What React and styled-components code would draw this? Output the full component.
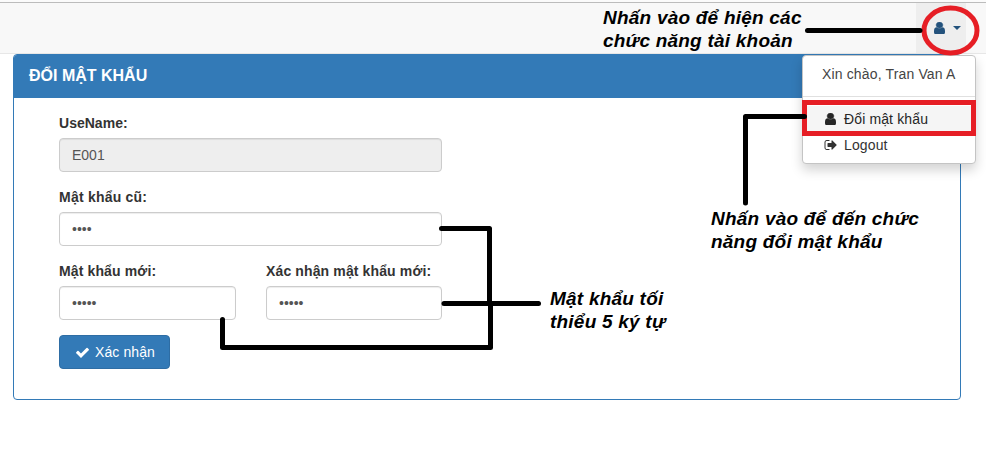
import React from "react";
import styled, { createGlobalStyle } from "styled-components";

const GlobalStyle = createGlobalStyle`
  *, *::before, *::after { box-sizing: border-box; }
  body {
    margin: 0;
    background: #fff;
    color: #333;
    font: 14px/20px "Liberation Sans", Arial, sans-serif;
    overflow: hidden;
  }
`;

const Page = styled.div`
  position: relative;
  width: 986px;
  height: 475px;
  overflow: hidden;
`;

const Navbar = styled.header`
  display: flex;
  justify-content: flex-end;
  height: 54px;
  padding: 0 20px;
  background: #f8f8f8;
  border-bottom: 1px solid #e7e7e7;
  box-shadow: inset 0 2px #fbfbfb, inset 0 3px #bcbcbc;
`;

const AccountToggle = styled.button`
  display: flex;
  align-items: center;
  gap: 8px;
  width: 50px;
  height: 50px;
  margin-top: 3px;
  padding: 0 0 0 18px;
  border: 0;
  background: #eee;
  color: #23527c;
`;

const Caret = styled.span`
  border-top: 4px solid currentColor;
  border-left: 4px solid transparent;
  border-right: 4px solid transparent;
`;

const Panel = styled.main`
  width: 948px;
  height: 346px;
  margin-left: 13px;
  border: 1px solid #337ab7;
  border-radius: 4px;
  overflow: hidden;
`;

const PanelHeading = styled.h1`
  height: 43px;
  margin: 0;
  padding: 10px 15px;
  background: #337ab7;
  color: #fff;
  font-size: 16px;
  line-height: 21px;
`;

const Form = styled.form`
  display: flex;
  flex-direction: column;
  gap: 15px;
  width: 428px;
  padding: 15px 0 0 45px;
`;

const FieldRow = styled.div`
  display: grid;
  grid-template-columns: 177px 176px;
  gap: 30px;
`;

const Field = styled.div`
  display: flex;
  flex-direction: column;
  gap: 5px;
`;

const Label = styled.label`
  font-weight: bold;
  white-space: nowrap;
  letter-spacing: ${(p) => p.$spacing || "0.13px"};
`;

const Input = styled.input`
  width: 100%;
  height: 34px;
  padding: 6px 12px;
  border: 1px solid #ccc;
  border-radius: 4px;
  background: ${(p) => (p.disabled ? "#eee" : "#fff")};
  box-shadow: inset 0 1px 1px rgba(0, 0, 0, 0.075);
  color: #555;
  font: inherit;
  outline: 0;
`;

const SubmitButton = styled.button`
  display: flex;
  align-items: center;
  gap: 5px;
  width: 111px;
  height: 34px;
  padding: 0 0 0 15px;
  border: 1px solid #2e6da4;
  border-radius: 4px;
  background: #337ab7;
  color: #fff;
  font: inherit;
  letter-spacing: 0.1px;
  white-space: nowrap;
`;

const Menu = styled.div`
  position: absolute;
  left: 802px;
  top: 55px;
  width: 174px;
  height: 109px;
  padding: 5px 0;
  border: 1px solid #c4c4c4;
  border-radius: 4px;
  background: #fff;
  box-shadow: 0 6px 12px rgba(0, 0, 0, 0.175);
`;

const Greeting = styled.div`
  height: 36px;
  padding: 3px 19px;
  border-bottom: 1px solid #e0e0e0;
  margin-bottom: 9px;
  color: #444;
  white-space: nowrap;
  letter-spacing: 0.15px;
`;

const MenuItem = styled.div`
  display: flex;
  align-items: center;
  gap: 6px;
  height: 26px;
  padding-left: 20px;
  background: ${(p) => (p.$active ? "#f5f5f5" : "transparent")};
  color: ${(p) => (p.$active ? "#262626" : "#333")};
  letter-spacing: 0.13px;
`;

const IconSlot = styled.span`
  display: flex;
  justify-content: center;
  width: 15px;
`;

const Icon = styled.svg`
  display: block;
  flex: none;
  fill: currentColor;
`;

const Markup = styled.svg`
  position: absolute;
  inset: 0;
  pointer-events: none;
`;

const Note = styled.p`
  position: absolute;
  left: ${(p) => p.$x}px;
  top: ${(p) => p.$y}px;
  margin: 0;
  color: #000;
  font-size: 19px;
  font-weight: bold;
  font-style: italic;
  line-height: 23px;
  letter-spacing: 0.22px;
  white-space: nowrap;
`;

const NoteLine = styled.span`
  display: block;
`;

const UserIcon = () => (
  <Icon width="11" height="12" viewBox="256 128 1280 1536" preserveAspectRatio="none">
    <path
      stroke="currentColor"
      strokeWidth="70"
      d="M1536 1399q0 109-62.5 187t-150.5 78h-854q-88 0-150.5-78t-62.5-187q0-85 8.5-160.5t31.5-152 58.5-131 94-89 134.5-34.5q131 128 313 128t313-128q76 0 134.5 34.5t94 89 58.5 131 31.5 152 8.5 160.5zm-256-887q0 159-112.5 271.5t-271.5 112.5-271.5-112.5-112.5-271.5 112.5-271.5 271.5-112.5 271.5 112.5 112.5 271.5z"
    />
  </Icon>
);

const CheckIcon = () => (
  <Icon width="15" height="15" viewBox="0 0 1792 1792">
    <path d="M1671 566q0 40-28 68l-724 724-136 136q-28 28-68 28t-68-28l-136-136-362-362q-28-28-28-68t28-68l136-136q28-28 68-28t68 28l294 295 656-657q28-28 68-28t68 28l136 136q28 28 28 68z" />
  </Icon>
);

const SignOutIcon = () => (
  <Icon width="14" height="14" viewBox="0 0 1792 1792">
    <path d="M704 1440q0 4 1 20t.5 26.5-3 23.5-10 19.5-20.5 6.5h-320q-119 0-203.5-84.5t-84.5-203.5v-704q0-119 84.5-203.5t203.5-84.5h320q13 0 22.5 9.5t9.5 22.5q0 4 1 20t.5 26.5-3 23.5-10 19.5-20.5 6.5h-320q-66 0-113 47t-47 113v704q0 66 47 113t113 47h312l11.5 1 11.5 3 8 5.5 7 9 2 13.5zm928-544q0 26-19 45l-544 544q-19 19-45 19t-45-19-19-45v-288h-448q-26 0-45-19t-19-45v-384q0-26 19-45t45-19h448v-288q0-26 19-45t45-19 45 19l544 544q19 19 19 45z" />
  </Icon>
);

export default function App() {
  return (
    <Page>
      <GlobalStyle />
      <Navbar>
        <AccountToggle type="button">
          <UserIcon />
          <Caret />
        </AccountToggle>
      </Navbar>
      <Panel>
        <PanelHeading>ĐỔI MẬT KHẨU</PanelHeading>
        <Form>
          <Field>
            <Label $spacing="0.02px">UseName:</Label>
            <Input disabled value="E001" />
          </Field>
          <Field>
            <Label $spacing="0.22px">Mật khẩu cũ:</Label>
            <Input type="password" readOnly value="1234" />
          </Field>
          <FieldRow>
            <Field>
              <Label>Mật khẩu mới:</Label>
              <Input type="password" readOnly value="12345" />
            </Field>
            <Field>
              <Label>Xác nhận mật khẩu mới:</Label>
              <Input type="password" readOnly value="12345" />
            </Field>
          </FieldRow>
          <SubmitButton type="button">
            <CheckIcon />
            Xác nhận
          </SubmitButton>
        </Form>
      </Panel>
      <Menu>
        <Greeting>Xin chào, Tran Van A</Greeting>
        <MenuItem $active>
          <IconSlot><UserIcon /></IconSlot>
          Đổi mật khẩu
        </MenuItem>
        <MenuItem>
          <IconSlot><SignOutIcon /></IconSlot>
          Logout
        </MenuItem>
      </Menu>
      <Markup width="986" height="475" fill="none" strokeLinecap="round" strokeLinejoin="round">
        <g stroke="#e61e25" strokeWidth="5">
          <ellipse cx="950.5" cy="30.5" rx="26.5" ry="22.5" />
          <rect x="804.5" y="102.5" width="169" height="31" strokeLinejoin="miter" />
        </g>
        <g stroke="#000" strokeWidth="5">
          <path d="M807.5 30.5H920" />
          <path d="M745.5 203V116.5H804.500" />
          <path d="M441.500 228.500H489.500V303" />
          <path d="M490.500 305V347.500H222.500V319.500" />
          <path d="M444 303.500H538.500" />
        </g>
      </Markup>
      <Note $x={603} $y={6}>
        <NoteLine>Nhấn vào để hiện các</NoteLine>
        <NoteLine>chức năng tài khoản</NoteLine>
      </Note>
      <Note $x={711} $y={207}>
        <NoteLine>Nhấn vào để đến chức</NoteLine>
        <NoteLine>năng đổi mật khẩu</NoteLine>
      </Note>
      <Note $x={550} $y={287}>
        <NoteLine>Mật khẩu tối</NoteLine>
        <NoteLine>thiểu 5 ký tự</NoteLine>
      </Note>
    </Page>
  );
}
